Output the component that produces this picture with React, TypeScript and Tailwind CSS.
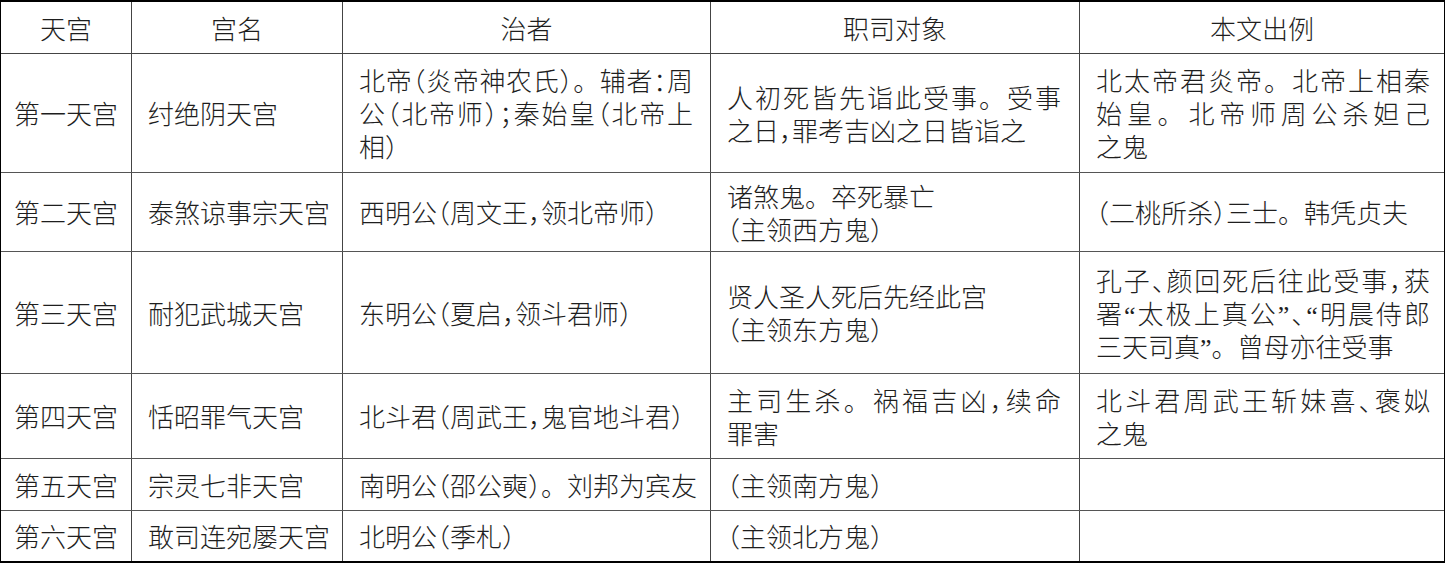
import React from "react";

type Line = { t: string; j?: boolean };
type Cell = Line[];

const HALF = new Set(["（", "）", "，", "：", "；", "、", "“", "”"]);

function renderText(s: string) {
  const parts: React.ReactNode[] = [];
  let buf = "";
  let key = 0;
  for (const ch of Array.from(s)) {
    if (HALF.has(ch)) {
      if (buf) {
        parts.push(<span key={key++}>{buf}</span>);
        buf = "";
      }
      parts.push(
        <span key={key++} className="[font-feature-settings:'halt']">
          {ch}
        </span>
      );
    } else {
      buf += ch;
    }
  }
  if (buf) parts.push(<span key={key++}>{buf}</span>);
  return parts;
}

const rows: { h: string; c1: string; c2: string; c3: Cell; c4: Cell; c5: Cell }[] = [
  {
    h: "h-[119px]",
    c1: "第一天宫",
    c2: "纣绝阴天宫",
    c3: [
      { t: "北帝（炎帝神农氏）。辅者：周", j: true },
      { t: "公（北帝师）；秦始皇（北帝上", j: true },
      { t: "相）" },
    ],
    c4: [
      { t: "人初死皆先诣此受事。受事", j: true },
      { t: "之日，罪考吉凶之日皆诣之" },
    ],
    c5: [
      { t: "北太帝君炎帝。北帝上相秦", j: true },
      { t: "始皇。北帝师周公杀妲己", j: true },
      { t: "之鬼" },
    ],
  },
  {
    h: "h-[79px]",
    c1: "第二天宫",
    c2: "泰煞谅事宗天宫",
    c3: [{ t: "西明公（周文王，领北帝师）" }],
    c4: [{ t: "诸煞鬼。卒死暴亡" }, { t: "（主领西方鬼）" }],
    c5: [{ t: "（二桃所杀）三士。韩凭贞夫" }],
  },
  {
    h: "h-[122px]",
    c1: "第三天宫",
    c2: "耐犯武城天宫",
    c3: [{ t: "东明公（夏启，领斗君师）" }],
    c4: [{ t: "贤人圣人死后先经此宫" }, { t: "（主领东方鬼）" }],
    c5: [
      { t: "孔子、颜回死后往此受事，获", j: true },
      { t: "署“太极上真公”、“明晨侍郎", j: true },
      { t: "三天司真”。曾母亦往受事" },
    ],
  },
  {
    h: "h-[85px]",
    c1: "第四天宫",
    c2: "恬昭罪气天宫",
    c3: [{ t: "北斗君（周武王，鬼官地斗君）" }],
    c4: [{ t: "主司生杀。祸福吉凶，续命", j: true }, { t: "罪害" }],
    c5: [{ t: "北斗君周武王斩妹喜、褒姒", j: true }, { t: "之鬼" }],
  },
  {
    h: "h-[52px]",
    c1: "第五天宫",
    c2: "宗灵七非天宫",
    c3: [{ t: "南明公（邵公奭）。刘邦为宾友" }],
    c4: [{ t: "（主领南方鬼）" }],
    c5: [],
  },
  {
    h: "h-[50px]",
    c1: "第六天宫",
    c2: "敢司连宛屡天宫",
    c3: [{ t: "北明公（季札）" }],
    c4: [{ t: "（主领北方鬼）" }],
    c5: [],
  },
];

function Lines({ cell }: { cell: Cell }) {
  return (
    <div className="w-[334px]">
      {cell.map((l, i) => (
        <div
          key={i}
          className={
            l.j
              ? "whitespace-nowrap text-justify [text-align-last:justify]"
              : "whitespace-nowrap text-left"
          }
        >
          {renderText(l.t)}
        </div>
      ))}
    </div>
  );
}

export default function App() {
  const font =
    "font-['Liberation_Serif','Noto_Sans_CJK_SC',serif] font-light text-[26px] leading-[33px] text-[#1e1e1e]";
  return (
    <div className="bg-white w-[1447px] h-[566px]">
      <div
        className={`w-[1445px] border-y-2 border-x border-black ${font}`}
        lang="zh-CN"
      >
        {/* header */}
        <div className="flex h-[52px] border-b border-[#444]">
          <div className="w-[131px] border-r border-[#444] flex items-center justify-center pt-[5px]">
            {renderText("天宫")}
          </div>
          <div className="w-[211px] border-r border-[#444] flex items-center justify-center pt-[5px]">
            {renderText("宫名")}
          </div>
          <div className="w-[368px] border-r border-[#444] flex items-center justify-center pt-[5px]">
            {renderText("治者")}
          </div>
          <div className="w-[369px] border-r border-[#444] flex items-center justify-center pt-[5px]">
            {renderText("职司对象")}
          </div>
          <div className="flex-1 flex items-center justify-center pt-[5px]">
            {renderText("本文出例")}
          </div>
        </div>
        {rows.map((r, i) => (
          <div
            key={i}
            className={`flex ${r.h} ${i < rows.length - 1 ? "border-b border-[#555]" : ""}`}
          >
            <div className="w-[131px] border-r border-[#444] flex items-center justify-center pt-[5px]">
              {renderText(r.c1)}
            </div>
            <div className="w-[211px] border-r border-[#444] flex items-center pl-4 pt-[5px]">
              {renderText(r.c2)}
            </div>
            <div className="w-[368px] border-r border-[#444] flex items-center pl-4 pt-[5px]">
              <Lines cell={r.c3} />
            </div>
            <div className="w-[369px] border-r border-[#444] flex items-center pl-4 pt-[5px]">
              <Lines cell={r.c4} />
            </div>
            <div className="flex-1 flex items-center pl-4 pt-[5px]">
              <Lines cell={r.c5} />
            </div>
          </div>
        ))}
      </div>
    </div>
  );
}
